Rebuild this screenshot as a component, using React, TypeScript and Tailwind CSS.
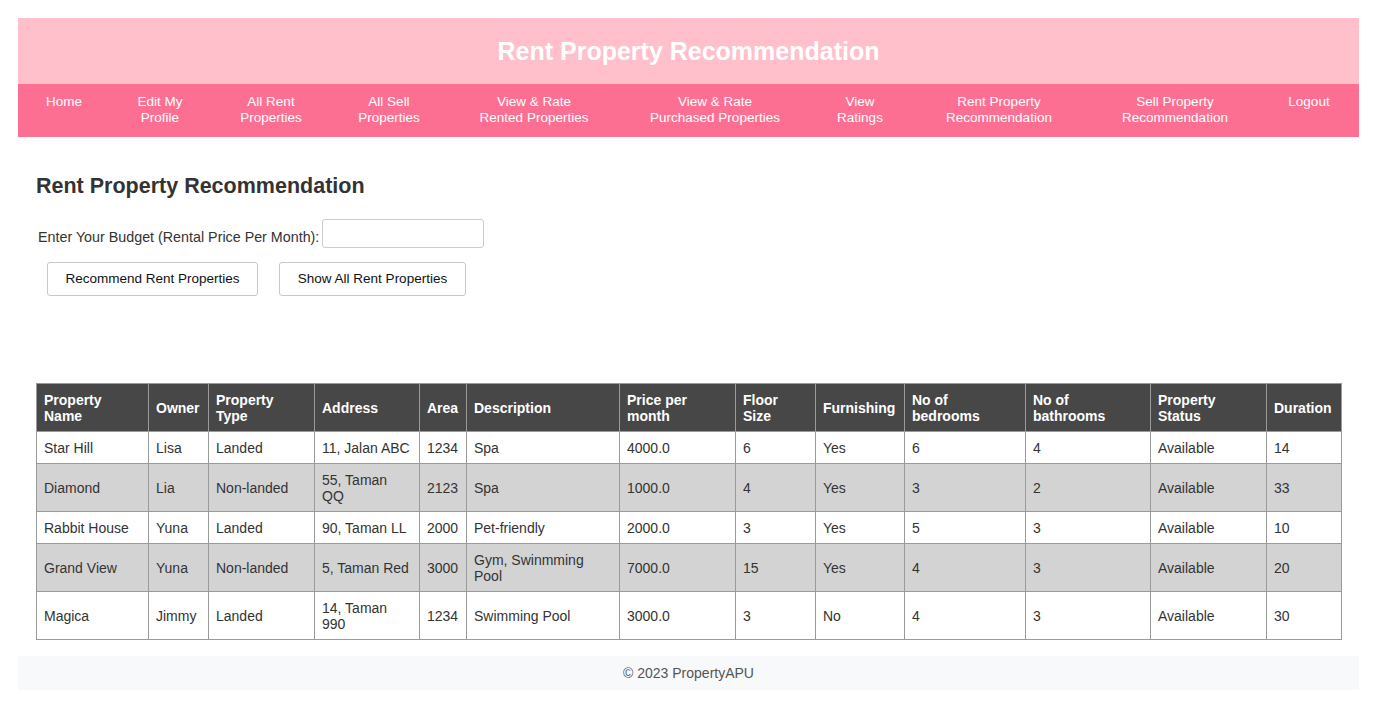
import React from "react";

const navItems: { lines: string[]; w: string }[] = [
  { lines: ["Home"], w: "w-[92px]" },
  { lines: ["Edit My", "Profile"], w: "w-[100px]" },
  { lines: ["All Rent", "Properties"], w: "w-[122px]" },
  { lines: ["All Sell", "Properties"], w: "w-[114px]" },
  { lines: ["View & Rate", "Rented Properties"], w: "w-[176px]" },
  { lines: ["View & Rate", "Purchased Properties"], w: "w-[186px]" },
  { lines: ["View", "Ratings"], w: "w-[104px]" },
  { lines: ["Rent Property", "Recommendation"], w: "w-[174px]" },
  { lines: ["Sell Property", "Recommendation"], w: "w-[178px]" },
  { lines: ["Logout"], w: "w-[90px]" },
];

const headers: string[][] = [
  ["Property", "Name"],
  ["Owner"],
  ["Property", "Type"],
  ["Address"],
  ["Area"],
  ["Description"],
  ["Price per", "month"],
  ["Floor", "Size"],
  ["Furnishing"],
  ["No of", "bedrooms"],
  ["No of", "bathrooms"],
  ["Property", "Status"],
  ["Duration"],
];

const colWidths = [112, 60, 106, 105, 47, 153, 116, 80, 89, 121, 125, 116, 75];

const rows: string[][] = [
  ["Star Hill", "Lisa", "Landed", "11, Jalan ABC", "1234", "Spa", "4000.0", "6", "Yes", "6", "4", "Available", "14"],
  ["Diamond", "Lia", "Non-landed", "55, Taman QQ", "2123", "Spa", "1000.0", "4", "Yes", "3", "2", "Available", "33"],
  ["Rabbit House", "Yuna", "Landed", "90, Taman LL", "2000", "Pet-friendly", "2000.0", "3", "Yes", "5", "3", "Available", "10"],
  ["Grand View", "Yuna", "Non-landed", "5, Taman Red", "3000", "Gym, Swinmming Pool", "7000.0", "15", "Yes", "4", "3", "Available", "20"],
  ["Magica", "Jimmy", "Landed", "14, Taman 990", "1234", "Swimming Pool", "3000.0", "3", "No", "4", "3", "Available", "30"],
];

export default function App() {
  return (
    <div
      className="min-h-screen bg-white p-[18px] text-[#333]"
      style={{ fontFamily: '"Liberation Sans", Arial, sans-serif' }}
    >
      <div className="w-[1341px]">
        <header className="h-[66px] bg-[#ffc0cb] flex items-center justify-center">
          <h1 className="text-[25px] font-bold text-white leading-none">Rent Property Recommendation</h1>
        </header>
        <nav className="h-[53px] bg-[#fd6f92] flex items-start pt-[10px]">
          {navItems.map((item, i) => (
            <div key={i} className={`${item.w} shrink-0 text-center text-white text-[13.5px] leading-4`}>
              {item.lines.map((l, j) => (
                <div key={j} className="whitespace-nowrap">{l}</div>
              ))}
            </div>
          ))}
        </nav>

        <main className="px-[18px] pt-[37px]">
          <h2 className="text-[21.5px] font-bold text-[#333] leading-6">Rent Property Recommendation</h2>
          <div className="mt-[21px] flex items-center pl-[2px]">
            <label className="text-[14.3px] text-[#333] mt-[8px]">Enter Your Budget (Rental Price Per Month):</label>
            <input
              type="text"
              className="ml-[3px] w-[162px] h-[29px] border border-[#ccc] rounded-[3px] bg-white outline-none"
            />
          </div>
          <div className="mt-[14px] flex gap-[21px] pl-[11px]">
            <button className="w-[211px] h-[34px] bg-white border border-[#c8c8c8] rounded-[3px] text-[13.5px] text-[#111]">
              Recommend Rent Properties
            </button>
            <button className="w-[187px] h-[34px] bg-white border border-[#c8c8c8] rounded-[3px] text-[13.5px] text-[#111]">
              Show All Rent Properties
            </button>
          </div>

          <table className="mt-[87px] table-fixed border-collapse w-[1305px]">
            <colgroup>
              {colWidths.map((w, i) => (
                <col key={i} style={{ width: w }} />
              ))}
            </colgroup>
            <thead>
              <tr className="bg-[#474747]">
                {headers.map((h, i) => (
                  <th
                    key={i}
                    className="border border-[#9a9a9a] px-[7px] pt-[8px] pb-[7px] text-left text-[14px] leading-4 font-bold text-white align-middle"
                  >
                    {h.map((l, j) => (
                      <div key={j}>{l}</div>
                    ))}
                  </th>
                ))}
              </tr>
            </thead>
            <tbody>
              {rows.map((r, i) => (
                <tr key={i} className={i % 2 === 1 ? "bg-[#d3d3d3]" : "bg-white"}>
                  {r.map((c, j) => (
                    <td
                      key={j}
                      className="border border-[#9a9a9a] px-[7px] pt-[8px] pb-[7px] text-[14px] leading-4 text-[#333] align-middle"
                    >
                      {c}
                    </td>
                  ))}
                </tr>
              ))}
            </tbody>
          </table>
        </main>

        <footer className="mt-[16px] h-[34px] bg-[#f8f9fb] flex items-center justify-center text-[14px] text-[#555]">
          © 2023 PropertyAPU
        </footer>
      </div>
    </div>
  );
}
